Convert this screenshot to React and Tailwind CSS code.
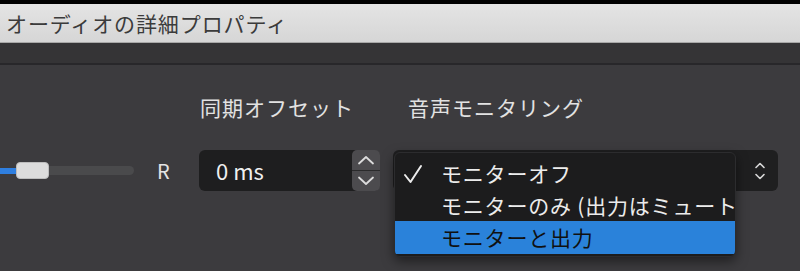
const font = { fontFamily: '"Noto Sans CJK JP", "Noto Sans", sans-serif' };

function Chevrons({ className }) {
  return (
    <svg width="12" height="24" viewBox="0 0 12 24" className={className} fill="none" stroke="currentColor" strokeWidth="1.6" strokeLinecap="round" strokeLinejoin="round">
      <path d="M2 8.5 6 4.5 10 8.5" />
      <path d="M2 15.5 6 19.5 10 15.5" />
    </svg>
  );
}

export default function App() {
  return (
    <div className="w-[800px] h-[271px] overflow-hidden flex flex-col bg-[#3c3b3e]" style={font}>
      <div className="h-[4px] bg-black" />

      {/* window title */}
      <div className="h-[39px] flex items-center pl-[6px] pt-[2px] bg-gradient-to-b from-[#e4e4e4] to-[#d6d6d6] border-b border-[#a8a8a8] text-[21px] text-[#3b3b3b] tracking-[0.9px]">
        オーディオの詳細プロパティ
      </div>
      <div className="h-[22px] bg-[#353436] border-b-2 border-[#28272a]" />

      {/* content */}
      <div className="relative flex-1">
        <div className="flex pt-[28px] h-[56px] text-[21px] text-[#e2e2e2] leading-[28px] tracking-[1px]">
          <div className="w-[408px] pl-[200px]">同期オフセット</div>
          <div>音声モニタリング</div>
        </div>

        <div className="flex items-center mt-[29px] h-[41px]">
          {/* balance slider */}
          <div className="w-[134px] flex items-center">
            <div className="w-[17px] h-[6px] bg-[#2f7fe0]" />
            <div className="w-[33px] h-[17px] -ml-[1px] rounded-[4px] bg-[#dcdcdc] border border-[#bdbdbd]" />
            <div className="flex-1 h-[9px] rounded-r-full bg-[#4a4a4c]" />
          </div>
          <div className="w-[65px] pl-[23px] text-[20px] text-[#e4e4e4] leading-none">R</div>

          {/* offset spin box */}
          <div className="w-[181px] h-[41px] rounded-[6px] bg-[#1e1e1f] flex">
            <div className="flex-1 flex items-center pl-[17px] text-[22px] text-[#f0f0f0]">0 ms</div>
            <div className="w-[28px] rounded-[5px] bg-[#4c4b4e] flex flex-col text-[#dcdcdc]">
              <div className="flex-1 flex items-center justify-center border-b border-[#2a2a2b]">
                <svg width="18" height="10" viewBox="0 0 18 10" fill="none" stroke="currentColor" strokeWidth="1.8" strokeLinecap="round" strokeLinejoin="round"><path d="M2 8.5 9 2l7 6.5" /></svg>
              </div>
              <div className="flex-1 flex items-center justify-center">
                <svg width="18" height="10" viewBox="0 0 18 10" fill="none" stroke="currentColor" strokeWidth="1.8" strokeLinecap="round" strokeLinejoin="round"><path d="M2 1.5 9 8l7-6.5" /></svg>
              </div>
            </div>
          </div>

          {/* monitoring select */}
          <div className="ml-[13px] w-[385px] h-[41px] rounded-[6px] bg-[#1f1f20] flex items-center justify-end pr-[12px] text-[#d8d8d8]">
            <Chevrons />
          </div>
        </div>

        {/* open popup menu */}
        <div className="absolute left-[394px] top-[87px] w-[342px] h-[105px] pt-[5px] rounded-[6px] bg-[#1c1c1d] border border-[#2c2c2e] shadow-[0_4px_12px_rgba(0,0,0,0.5)] text-[21px] text-[#ececec] tracking-[0.8px] overflow-hidden">
          <div className="h-[32px] flex items-center">
            <div className="w-[46px] pl-[8px] flex items-center">
              <svg width="20" height="20" viewBox="0 0 20 20" fill="none" stroke="currentColor" strokeWidth="2" strokeLinecap="round" strokeLinejoin="round"><path d="M2 11l5.5 7L18 2" /></svg>
            </div>
            <span>モニターオフ</span>
          </div>
          <div className="h-[31px] flex items-center pl-[46px] whitespace-nowrap">モニターのみ (出力はミュート)</div>
          <div className="h-[33px] flex items-center pl-[46px] bg-[#2a82da] text-[#101010]">モニターと出力</div>
        </div>
      </div>
    </div>
  );
}
